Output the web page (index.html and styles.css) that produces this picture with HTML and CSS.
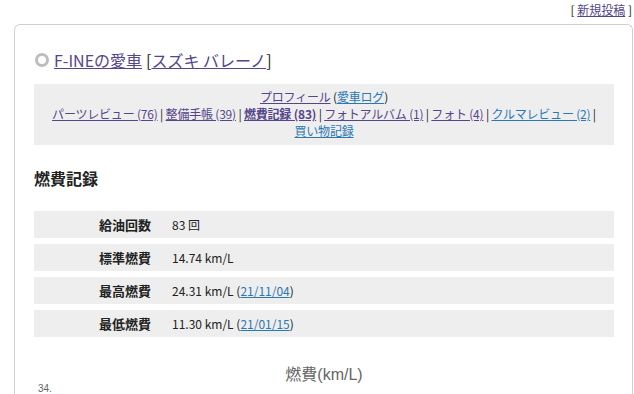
FILE: index.html
```html
<!DOCTYPE html>
<html lang="ja">
<head>
<meta charset="utf-8">
<link rel="stylesheet" href="styles.css">
</head>
<body>
<div class="topbar">[ <a class="visited" href="#">新規投稿</a> ]</div>
<div class="card">
  <h1 class="title"><span class="dot"></span><a class="visited" href="#">F-INEの愛車</a> <span class="bracket">[<a class="visited" href="#">スズキ バレーノ</a>]</span></h1>
  <div class="nav">
    <div><a class="visited" href="#">プロフィール</a> (<a href="#">愛車ログ</a>)</div>
    <div><a class="visited" href="#">パーツレビュー (76)</a> | <a class="visited" href="#">整備手帳 (39)</a> | <a class="visited current" href="#">燃費記録 (83)</a> | <a class="visited" href="#">フォトアルバム (1)</a> | <a class="visited" href="#">フォト (4)</a> | <a href="#">クルマレビュー (2)</a> |</div>
    <div><a href="#">買い物記録</a></div>
  </div>
  <h2 class="heading">燃費記録</h2>
  <div class="stats">
    <div class="row"><div class="label">給油回数</div><div class="value">83 回</div></div>
    <div class="row"><div class="label">標準燃費</div><div class="value">14.74 km/L</div></div>
    <div class="row"><div class="label">最高燃費</div><div class="value">24.31 km/L (<a href="#">21/11/04</a>)</div></div>
    <div class="row"><div class="label">最低燃費</div><div class="value">11.30 km/L (<a href="#">21/01/15</a>)</div></div>
  </div>
  <div class="chart">
    <div class="chart-title">燃費(km/L)</div>
    <div class="axis">34.</div>
  </div>
</div>
</body>
</html>
```
FILE: styles.css
```css
html, body {
  margin: 0;
  padding: 0;
  background: #fff;
}
body {
  font-family: "Noto Sans CJK JP", "DejaVu Sans", sans-serif;
  font-size: 12px;
  color: #222;
  height: 394px;
  overflow: hidden;
}
a {
  color: #2a78b4;
  text-decoration: underline;
}
a.visited {
  color: #55458a;
}
.topbar {
  text-align: right;
  padding: 1px 2px 0 0;
  height: 24px;
  line-height: 17px;
  box-sizing: border-box;
}
.card {
  margin: 0 1px 0 14px;
  border: 1px solid #cfcfcf;
  border-bottom: none;
  border-radius: 6px 6px 0 0;
  padding: 22px 18px 0 19px;
  height: 370px;
  box-sizing: border-box;
  overflow: hidden;
}
.title {
  margin: 0;
  font-size: 16px;
  font-weight: normal;
  line-height: 26px;
  display: flex;
  align-items: center;
}
.dot {
  display: inline-block;
  width: 8px;
  height: 8px;
  border: 3px solid #bdbdbd;
  border-radius: 50%;
  margin: 0 5px 0 1px;
  box-sizing: content-box;
}
.bracket {
  margin-left: 4px;
  color: #222;
}
.nav {
  margin-top: 11px;
  background: #eeeeee;
  text-align: center;
  padding: 4px 0 6px;
  line-height: 17px;
  font-size: 12px;
  letter-spacing: -0.2px;
}
.nav .current {
  font-weight: bold;
}
.heading {
  margin: 23px 0 0;
  font-size: 16px;
  font-weight: bold;
  line-height: 20px;
  color: #222;
}
.stats {
  margin-top: 23px;
  display: flex;
  flex-direction: column;
  gap: 6px;
}
.row {
  background: #eeeeee;
  height: 27px;
  display: grid;
  grid-template-columns: 117px 1fr;
  column-gap: 21px;
  align-items: center;
}
.label {
  text-align: right;
  font-weight: bold;
  font-size: 13px;
}
.value {
  font-size: 12px;
}
.chart {
  margin-top: 22px;
}
.chart-title {
  text-align: center;
  font-family: "Liberation Sans", "Noto Sans CJK JP", sans-serif;
  font-size: 16px;
  color: #666;
  line-height: 32px;
}
.axis {
  font-size: 10px;
  color: #666;
  margin: -8px 0 0 4px;
  font-family: "Liberation Sans", sans-serif;
}
```
